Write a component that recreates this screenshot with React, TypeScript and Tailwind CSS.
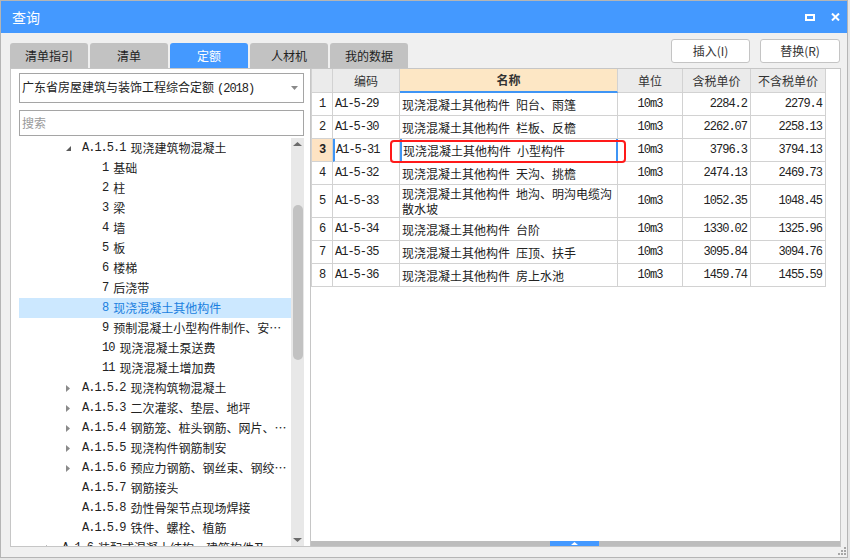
import React from 'react';

type TreeNode = {
  level: 1 | 2 | 3;
  code: string;
  text: string;
  arrow?: 'open' | 'closed';
  selected?: boolean;
};

type Row = {
  no: number;
  code: string;
  name: React.ReactNode;
  unit: string;
  tax: string;
  noTax: string;
  tall?: boolean;
  active?: boolean;
};

const mono = "font-['Liberation_Mono',monospace] text-[12px] tracking-[-1px]";

const tree: TreeNode[] = [
  { level: 2, code: 'A.1.5.1', text: '现浇建筑物混凝土', arrow: 'open' },
  { level: 3, code: '1', text: '基础' },
  { level: 3, code: '2', text: '柱' },
  { level: 3, code: '3', text: '梁' },
  { level: 3, code: '4', text: '墙' },
  { level: 3, code: '5', text: '板' },
  { level: 3, code: '6', text: '楼梯' },
  { level: 3, code: '7', text: '后浇带' },
  { level: 3, code: '8', text: '现浇混凝土其他构件', selected: true },
  { level: 3, code: '9', text: '预制混凝土小型构件制作、安装、运输' },
  { level: 3, code: '10', text: '现浇混凝土泵送费' },
  { level: 3, code: '11', text: '现浇混凝土增加费' },
  { level: 2, code: 'A.1.5.2', text: '现浇构筑物混凝土', arrow: 'closed' },
  { level: 2, code: 'A.1.5.3', text: '二次灌浆、垫层、地坪', arrow: 'closed' },
  { level: 2, code: 'A.1.5.4', text: '钢筋笼、桩头钢筋、网片、钢筋网制安', arrow: 'closed' },
  { level: 2, code: 'A.1.5.5', text: '现浇构件钢筋制安', arrow: 'closed' },
  { level: 2, code: 'A.1.5.6', text: '预应力钢筋、钢丝束、钢绞线制安', arrow: 'closed' },
  { level: 2, code: 'A.1.5.7', text: '钢筋接头' },
  { level: 2, code: 'A.1.5.8', text: '劲性骨架节点现场焊接' },
  { level: 2, code: 'A.1.5.9', text: '铁件、螺栓、植筋' },
  { level: 1, code: 'A.1.6', text: '装配式混凝土结构、建筑构件及部品工程', arrow: 'closed' },
];

const rows: Row[] = [
  { no: 1, code: 'A1-5-29', name: '现浇混凝土其他构件\u2002阳台、雨篷', unit: '10m3', tax: '2284.2', noTax: '2279.4' },
  { no: 2, code: 'A1-5-30', name: '现浇混凝土其他构件\u2002栏板、反檐', unit: '10m3', tax: '2262.07', noTax: '2258.13' },
  { no: 3, code: 'A1-5-31', name: '现浇混凝土其他构件\u2002小型构件', unit: '10m3', tax: '3796.3', noTax: '3794.13', active: true },
  { no: 4, code: 'A1-5-32', name: '现浇混凝土其他构件\u2002天沟、挑檐', unit: '10m3', tax: '2474.13', noTax: '2469.73' },
  {
    no: 5,
    code: 'A1-5-33',
    name: (
      <>
        现浇混凝土其他构件{'\u2002'}地沟、明沟电缆沟
        <br />
        散水坡
      </>
    ),
    unit: '10m3',
    tax: '1052.35',
    noTax: '1048.45',
    tall: true,
  },
  { no: 6, code: 'A1-5-34', name: '现浇混凝土其他构件\u2002台阶', unit: '10m3', tax: '1330.02', noTax: '1325.96' },
  { no: 7, code: 'A1-5-35', name: '现浇混凝土其他构件\u2002压顶、扶手', unit: '10m3', tax: '3095.84', noTax: '3094.76' },
  { no: 8, code: 'A1-5-36', name: '现浇混凝土其他构件\u2002房上水池', unit: '10m3', tax: '1459.74', noTax: '1455.59' },
];

const tabs = ['清单指引', '清单', '定额', '人材机', '我的数据'];

function TitleBar() {
  return (
    <div className="flex h-[32px] shrink-0 items-center justify-between bg-[#4499ff] pl-[11px] pr-[7px]">
      <span className="text-[14px] leading-none text-white">查询</span>
      <div className="flex items-center gap-[16px]">
        <div className="h-[7px] w-[10px] border-2 border-white" />
        <svg width="9" height="8" viewBox="0 0 9 8">
          <path d="M1 0.5 L8 7.5 M8 0.5 L1 7.5" stroke="white" strokeWidth="2" />
        </svg>
      </div>
    </div>
  );
}

function TreeRow({ node }: { node: TreeNode }) {
  const pad =
    node.level === 1 ? 'pl-[27px]' : node.level === 2 ? 'pl-[47px]' : 'pl-[83px]';
  return (
    <div
      className={`flex h-[20px] shrink-0 items-center whitespace-nowrap pr-[2px] leading-[20px] ${pad} ${
        node.selected ? 'bg-[#cce8ff] text-[#1a7fe0]' : 'text-[#222]'
      }`}
    >
      {node.level !== 3 && (
        <span className="flex w-[16px] shrink-0 items-center">
          {node.arrow === 'open' && (
            <svg width="5" height="5" viewBox="0 0 5 5">
              <polygon points="5,0 5,5 0,5" fill="#5a5a5a" />
            </svg>
          )}
          {node.arrow === 'closed' && (
            <svg width="4" height="7" viewBox="0 0 4 7">
              <polygon points="0,0 4,3.5 0,7" fill="#8a8a8a" />
            </svg>
          )}
        </span>
      )}
      <span className={`shrink-0 ${mono}`}>{node.code}</span>
      <span className="ml-[5px] min-w-0 truncate text-[12px]">{node.text}</span>
    </div>
  );
}

function LeftPanel() {
  return (
    <div className="flex h-full w-[301px] shrink-0 flex-col border border-[#c6c6c6] bg-white pl-[8px] pr-[6px]">
      <div className="mt-[4px] flex h-[30px] shrink-0 items-center justify-between border border-[#a5a5a5] pl-[2px] pr-[5px]">
        <span className="whitespace-nowrap text-[12px] text-[#222]">
          广东省房屋建筑与装饰工程综合定额<span className={`ml-[3px] ${mono}`}>(2018)</span>
        </span>
        <svg width="7" height="4" viewBox="0 0 7 4">
          <polygon points="0,0 7,0 3.5,4" fill="#8a8a8a" />
        </svg>
      </div>
      <div className="mt-[7px] flex h-[26px] shrink-0 items-center border border-[#a5a5a5] pl-[2px] text-[12px] text-[#9a9a9a]">
        搜索
      </div>
      <div className="mt-[2px] flex min-h-0 flex-1">
        <div className="flex min-w-0 flex-1 flex-col overflow-hidden">
          {tree.map((n) => (
            <TreeRow key={n.code + n.text} node={n} />
          ))}
        </div>
        <div className="flex w-[13px] shrink-0 flex-col items-center bg-[#e8e8e8]">
          <div className="flex h-[12px] items-center justify-center">
            <svg width="9" height="4" viewBox="0 0 9 4">
              <polygon points="4.5,0 9,4 0,4" fill="#6b6b6b" />
            </svg>
          </div>
          <div className="mt-[55px] h-[155px] w-[10px] rounded-full bg-[#c2c2c2]" />
          <div className="flex-1" />
          <div className="flex h-[12px] items-center justify-center">
            <svg width="9" height="4" viewBox="0 0 9 4">
              <polygon points="0,0 9,0 4.5,4" fill="#6b6b6b" />
            </svg>
          </div>
        </div>
      </div>
    </div>
  );
}

const grid = 'grid grid-cols-[21px_67px_218px_65px_68px_75px]';
const cell = 'flex items-center border-r border-b border-[#d2d2d2]';

function RightPanel() {
  return (
    <div className="relative flex h-full w-[530px] shrink-0 flex-col border-y border-r border-[#c6c6c6] bg-white">
      <div className="w-[515px] border-l border-[#d2d2d2] text-[#222]">
        <div className={`${grid} h-[24px] text-[12px] text-[#333]`}>
          <div className={`${cell} bg-[#ebebeb]`} />
          <div className={`${cell} justify-center bg-[#ebebeb]`}>编码</div>
          <div className="flex items-center justify-center border-r border-b-2 border-[#d2d2d2] border-b-[#3f95f5] bg-[#fde7c5] font-bold">
            名称
          </div>
          <div className={`${cell} justify-center bg-[#ebebeb]`}>单位</div>
          <div className={`${cell} justify-center bg-[#ebebeb]`}>含税单价</div>
          <div className={`${cell} justify-center bg-[#ebebeb]`}>不含税单价</div>
        </div>
        {rows.map((r) => (
          <div key={r.no} className={`${grid} ${r.tall ? 'h-[33px]' : 'h-[23px]'}`}>
            <div
              className={`${cell} justify-center ${mono} ${
                r.active ? 'bg-[#fde3c3] font-bold' : ''
              }`}
            >
              {r.no}
            </div>
            <div
              className={`${cell} ${mono} ${
                r.active ? 'border-l-2 border-l-[#3f95f5] pl-[1px]' : 'pl-[2px]'
              }`}
            >
              {r.code}
            </div>
            <div
              className={`${cell} whitespace-nowrap text-[12px] leading-[15px] ${
                r.active ? 'border-l-2 border-r-2 border-l-[#3f95f5] border-r-[#3f95f5] pl-[1px]' : 'pl-[2px]'
              }`}
            >
              <span>{r.name}</span>
            </div>
            <div className={`${cell} justify-center ${mono}`}>{r.unit}</div>
            <div className={`${cell} justify-end pr-[3px] ${mono}`}>{r.tax}</div>
            <div className={`${cell} justify-end pr-[3px] ${mono}`}>{r.noTax}</div>
          </div>
        ))}
      </div>
      <div className="flex-1" />
      <div className="flex h-[5px] shrink-0 bg-[#bdbdbd]">
        <div className="ml-[239px] flex w-[49px] items-center justify-center bg-[#4499ff]">
          <svg width="7" height="3" viewBox="0 0 7 3">
            <polygon points="3.5,0 7,3 0,3" fill="white" />
          </svg>
        </div>
      </div>
      <div className="absolute left-[79px] top-[71px] h-[23px] w-[236px] rounded-[4px] border-2 border-[#ff1a1a]" />
    </div>
  );
}

export default function App() {
  return (
    <div className="h-[560px] w-[850px] bg-[#e6e6e6] font-['Noto_Sans_CJK_SC',sans-serif] text-[12px] text-[#222]">
      <div className="relative flex h-[558px] w-[848px] flex-col border border-[#b5b5b5] bg-[#f0f0f0]">
        <TitleBar />
        <div className="mt-[6px] flex h-[29px] shrink-0 items-end justify-between pl-[9px] pr-[7px]">
          <div className="flex gap-[2px]">
            {tabs.map((t) => (
              <div
                key={t}
                className={`flex h-[25px] w-[78px] items-center justify-center rounded-t-[3px] text-[12px] ${
                  t === '定额' ? 'bg-[#4499ff] text-white' : 'bg-[#c2c2c2] text-[#222]'
                }`}
              >
                {t}
              </div>
            ))}
          </div>
          <div className="flex gap-[10px] self-start">
            <button className="h-[24px] w-[79px] rounded-[3px] border border-[#c4c4c4] bg-white text-[12px] text-[#333]">
              插入(I)
            </button>
            <button className="h-[24px] w-[80px] rounded-[3px] border border-[#c4c4c4] bg-white text-[12px] text-[#333]">
              替换(R)
            </button>
          </div>
        </div>
        <div className="flex h-[479px] shrink-0 pl-[9px]">
          <LeftPanel />
          <RightPanel />
        </div>
        <svg className="absolute bottom-[1px] right-0" width="9" height="9" viewBox="0 0 9 9">
          <rect x="6" y="0" width="2" height="2" fill="#a6a6a6" />
          <rect x="3" y="3" width="2" height="2" fill="#a6a6a6" />
          <rect x="6" y="3" width="2" height="2" fill="#a6a6a6" />
          <rect x="0" y="6" width="2" height="2" fill="#a6a6a6" />
          <rect x="3" y="6" width="2" height="2" fill="#a6a6a6" />
          <rect x="6" y="6" width="2" height="2" fill="#a6a6a6" />
        </svg>
      </div>
    </div>
  );
}
